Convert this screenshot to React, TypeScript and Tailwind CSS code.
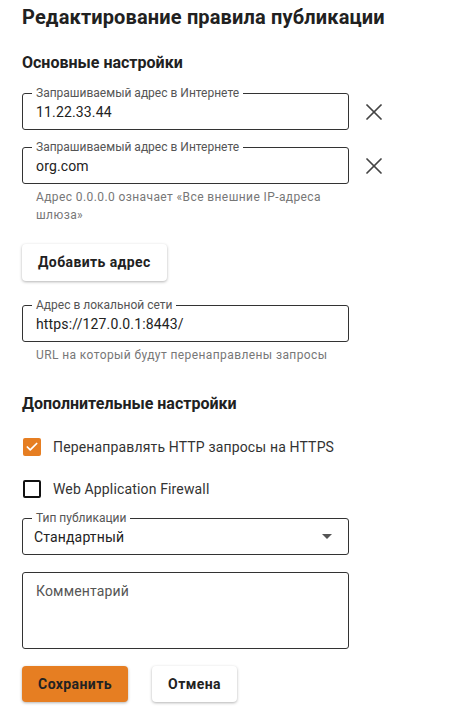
import { Check, X } from "lucide-react";

function OutlinedField({ label, value }: { label: string; value: string }) {
  return (
    <div className="relative flex h-[37px] w-[327px] items-center rounded-[3px] border border-[#333] pl-[13px]">
      <span className="absolute left-[9px] top-[-9px] bg-white px-[4px] text-[12px] leading-[16px] text-[#555]">{label}</span>
      <span className="text-[14px] leading-[20px] tracking-[0.15px] text-[#222]">{value}</span>
    </div>
  );
}

function Helper({ children }: { children: React.ReactNode }) {
  return <p className="mt-[4px] w-[327px] px-[14px] text-[12px] leading-[18px] tracking-[0.4px] text-[#777]">{children}</p>;
}

export default function App() {
  return (
    <div className="min-h-[714px] bg-white px-[22px] pt-[3px]" style={{ fontFamily: "Roboto, 'Noto Sans', sans-serif" }}>
      <h1 className="text-[20px] font-bold leading-[28px] tracking-[0.15px] text-[#212121]">Редактирование правила публикации</h1>

      <h3 className="mt-[20px] text-[16px] font-bold leading-[24px] text-[#212121]">Основные настройки</h3>

      <div className="mt-[18px] flex items-center">
        <OutlinedField label="Запрашиваемый адрес в Интернете" value="11.22.33.44" />
        <X className="ml-[11px] h-[28px] w-[28px] text-[#444]" strokeWidth={1.5} />
      </div>
      <div className="mt-[17px] flex items-center">
        <OutlinedField label="Запрашиваемый адрес в Интернете" value="org.com" />
        <X className="ml-[11px] h-[28px] w-[28px] text-[#444]" strokeWidth={1.5} />
      </div>
      <Helper>Адрес 0.0.0.0 означает «Все внешние IP-адреса шлюза»</Helper>

      <div className="mt-[20px] flex">
        <button className="h-[37px] rounded-[4px] bg-white px-[16px] text-[14px] font-bold tracking-[0.4px] text-[#212121] shadow-[0_1px_3px_rgba(0,0,0,0.3)]">
          Добавить адрес
        </button>
      </div>

      <div className="mt-[24px]">
        <OutlinedField label="Адрес в локальной сети" value="https://127.0.0.1:8443/" />
      </div>
      <Helper>URL на который будут перенаправлены запросы</Helper>

      <h3 className="mt-[28px] text-[16px] font-bold leading-[24px] text-[#212121]">Дополнительные настройки</h3>

      <div className="mt-[22px] flex flex-col gap-[24px]">
        <label className="flex h-[18px] items-center">
          <span className="ml-[1px] flex h-[18px] w-[18px] items-center justify-center rounded-[2px] bg-[#e67e22]">
            <Check className="h-[14px] w-[14px] text-white" strokeWidth={3} />
          </span>
          <span className="ml-[12px] text-[14px] leading-[20px] tracking-[0.15px] text-[#333]">Перенаправлять HTTP запросы на HTTPS</span>
        </label>
        <label className="flex h-[18px] items-center">
          <span className="ml-[1px] h-[18px] w-[18px] rounded-[2px] border-2 border-[#111]" />
          <span className="ml-[12px] text-[14px] leading-[20px] tracking-[0.15px] text-[#333]">Web Application Firewall</span>
        </label>
      </div>

      <div className="relative mt-[20px] flex h-[37px] w-[327px] items-center rounded-[3px] border border-[#333] pl-[11px] pr-[16px]">
        <span className="absolute left-[9px] top-[-9px] bg-white px-[4px] text-[12px] leading-[16px] text-[#555]">Тип публикации</span>
        <span className="flex-1 text-[14px] leading-[20px] tracking-[0.15px] text-[#222]">Стандартный</span>
        <svg width="10" height="5" viewBox="0 0 10 5" className="text-[#555]">
          <path d="M0 0L5 5L10 0Z" fill="currentColor" />
        </svg>
      </div>

      <div className="mt-[17px] h-[77px] w-[327px] rounded-[3px] border border-[#333] px-[13px] pt-[8px]">
        <p className="text-[14px] leading-[20px] tracking-[0.15px] text-[#555]">Комментарий</p>
      </div>

      <div className="mt-[17px] flex gap-[24px]">
        <button className="h-[36px] w-[106px] rounded-[4px] bg-[#e67e22] text-[14px] font-bold tracking-[0.4px] text-[#222] shadow-[0_1px_3px_rgba(0,0,0,0.3)]">
          Сохранить
        </button>
        <button className="h-[36px] w-[85px] rounded-[4px] bg-white text-[14px] font-bold tracking-[0.4px] text-[#222] shadow-[0_1px_3px_rgba(0,0,0,0.3)]">
          Отмена
        </button>
      </div>
    </div>
  );
}
